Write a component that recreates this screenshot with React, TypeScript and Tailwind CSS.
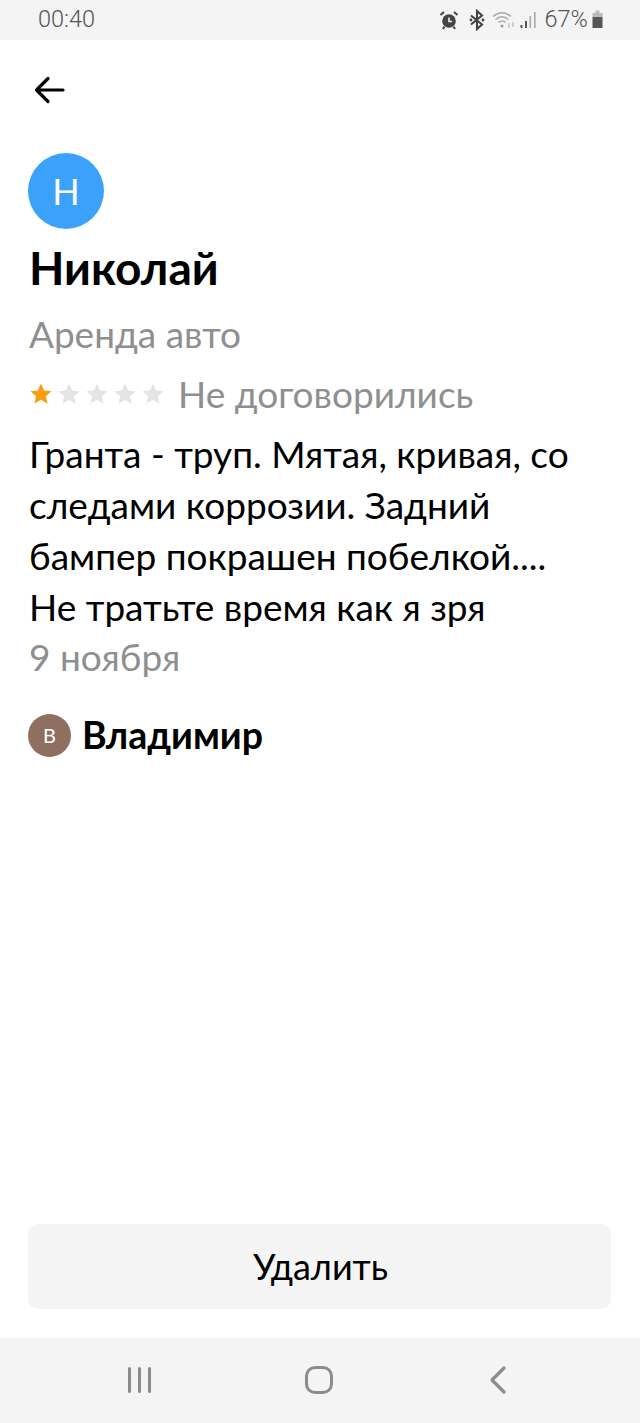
import React from "react";

const Star = ({ color }: { color: string }) => (
  <svg width="24" height="24" viewBox="0 0 24 24" className="block">
    <path d="M12 1.5l3.1 7 7.4.7-5.6 5 1.7 7.5L12 17.8l-6.6 3.9 1.7-7.5-5.6-5 7.4-.7z" fill={color} />
  </svg>
);

export default function App() {
  return (
    <div className="flex h-[1423px] w-[640px] flex-col overflow-hidden bg-white text-black" style={{ fontFamily: '"Lato", "Noto Sans", sans-serif' }}>
      <div className="flex h-10 shrink-0 items-center justify-between bg-[#f4f4f4] pl-[38px] pr-[37px] text-[#555]" style={{ fontFamily: '"Roboto", sans-serif' }}>
        <span className="text-[23.5px] font-light">00:40</span>
        <div className="flex items-center">
          <svg width="20" height="20" viewBox="0 0 20 20" className="mr-[10px]">
            <circle cx="10" cy="11" r="6.8" fill="#444" />
            <path d="M10 7.5V11.5H13" stroke="#eee" strokeWidth="1.6" fill="none" />
            <path d="M1.5 5L5 2M18.5 5L15 2M5.5 16.5L4 19M14.5 16.5L16 19" stroke="#444" strokeWidth="2" fill="none" />
          </svg>
          <svg width="16" height="22" viewBox="0 0 16 22" className="mr-[7px]">
            <path d="M2 6.5L13 15.5L8 20V2L13 6.5L2 15.5" stroke="#444" strokeWidth="2.1" fill="none" />
            <circle cx="2" cy="11" r="1.4" fill="#444" />
            <circle cx="14" cy="11" r="1.4" fill="#444" />
          </svg>
          <svg width="26" height="20" viewBox="0 0 26 20" className="mr-[2px]">
            <path d="M1 6.5Q10-1 19 6.5M3.5 9.5Q10 4 16.5 9.5M6.5 12.5Q10 9.5 13.5 12.5" stroke="#aaa" strokeWidth="1.6" fill="none" />
            <circle cx="10" cy="16" r="1.5" fill="#999" />
            <path d="M17 13v5M21 12v5" stroke="#bbb" strokeWidth="1.3" />
          </svg>
          <svg width="17" height="20" viewBox="0 0 17 20" className="mr-[8px]">
            <rect x="0.5" y="15" width="2" height="3" fill="#555" />
            <rect x="5" y="11" width="2" height="7" fill="#555" />
            <rect x="9.5" y="6" width="1.6" height="12" fill="#aaa" />
            <rect x="14" y="2" width="1.6" height="16" fill="#aaa" />
          </svg>
          <span className="text-[23.5px] font-light">67%</span>
          <svg width="11" height="20" viewBox="0 0 11 20" className="ml-[4px]">
            <rect x="3.5" y="0.5" width="4" height="3" fill="#bbb" />
            <rect x="0.5" y="3" width="10" height="4" fill="#bbb" />
            <rect x="0.5" y="7" width="10" height="11" fill="#555" />
          </svg>
        </div>
      </div>

      <div className="flex min-h-0 flex-1 flex-col px-[28px]">
        <svg width="32" height="28" viewBox="0 0 32 28" className="mt-[36px] ml-[6px] shrink-0">
          <path d="M29 14H3M14 2.5L2.5 14L14 25.5" stroke="#000" strokeWidth="3.2" strokeLinecap="round" strokeLinejoin="round" fill="none" />
        </svg>
        <div className="mt-[49px] flex h-[76px] w-[76px] shrink-0 items-center justify-center rounded-full bg-[#3ba1fb] text-[36px] text-white">Н</div>
        <h1 className="mt-[8px] pl-px text-[46px] font-bold leading-[62px]">Николай</h1>
        <p className="mt-[9px] pl-px text-[37px] leading-[51px] text-[#8f8f8f]">Аренда авто</p>
        <div className="mt-[9px] flex h-[51px] items-center">
          <div className="ml-[1px] flex gap-[4px]">
            <Star color="#f89c13" />
            <Star color="#e4e4e4" />
            <Star color="#e4e4e4" />
            <Star color="#e4e4e4" />
            <Star color="#e4e4e4" />
          </div>
          <span className="ml-[13px] text-[37px] text-[#8f8f8f]">Не договорились</span>
        </div>
        <p className="mt-[9px] pl-px text-[37px] leading-[51px]">
          Гранта - труп. Мятая, кривая, со
          <br />
          следами коррозии. Задний
          <br />
          бампер покрашен побелкой....
          <br />
          Не тратьте время как я зря
        </p>
        <p className="pl-px text-[37px] leading-[50px] text-[#8f8f8f]">9 ноября</p>
        <div className="mt-[31px] flex items-center">
          <div className="flex h-[43px] w-[43px] items-center justify-center rounded-full bg-[#8f6f60] text-[20px] text-white">В</div>
          <span className="ml-[11px] text-[37.5px] font-bold leading-[44px]">Владимир</span>
        </div>
        <button className="mt-auto mb-[29px] flex h-[85px] w-[583px] shrink-0 items-center justify-center rounded-[10px] bg-[#f4f4f4] pb-[2px] pl-[2px] text-[36px]">Удалить</button>
      </div>

      <div className="flex h-[85px] shrink-0 items-center bg-[#f4f4f4] pb-[1px]">
        <div className="ml-[128px] flex gap-[7px]">
          <div className="h-[26px] w-[3px] rounded-full bg-[#8c8c8c]" />
          <div className="h-[26px] w-[3px] rounded-full bg-[#8c8c8c]" />
          <div className="h-[26px] w-[3px] rounded-full bg-[#8c8c8c]" />
        </div>
        <div className="ml-[154px] h-[28px] w-[28px] rounded-[10px] border-[3px] border-[#8c8c8c]" />
        <svg width="20" height="30" viewBox="0 0 20 30" className="ml-[155px]">
          <path d="M16 3L4 15L16 27" stroke="#8c8c8c" strokeWidth="3.2" strokeLinecap="round" strokeLinejoin="round" fill="none" />
        </svg>
      </div>
    </div>
  );
}
